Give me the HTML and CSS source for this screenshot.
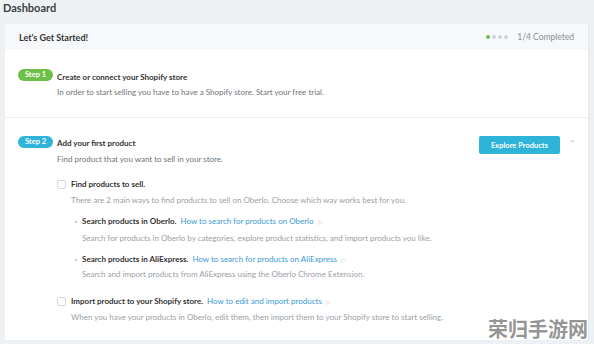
FILE: index.html
```html
<!DOCTYPE html>
<html lang="en">
<head>
    <meta charset="UTF-8">
    <title>Dashboard</title>
    <link rel="stylesheet" href="styles.css">
</head>
<body>
    <h1 class="page-title">Dashboard</h1>
    <div class="card">
        <div class="card-header">
            <h2>Let's Get Started!</h2>
            <div class="progress">
                <span class="dot done"></span><span class="dot"></span><span class="dot"></span><span class="dot"></span>
                <span class="progress-text">1/4 Completed</span>
            </div>
        </div>

        <div class="step step-one">
            <span class="pill green">Step 1</span>
            <div class="step-body">
                <div class="step-title">Create or connect your Shopify store</div>
                <p class="step-desc">In order to start selling you have to have a Shopify store. Start your free trial.</p>
            </div>
        </div>

        <div class="step step-two">
            <span class="pill blue">Step 2</span>
            <div class="step-body">
                <div class="step-title">Add your first product</div>
                <p class="step-desc">Find product that you want to sell in your store.</p>

                <div class="task">
                    <div class="task-head"><span class="check"></span><strong>Find products to sell.</strong></div>
                    <p class="task-desc">There are 2 main ways to find products to sell on Oberlo. Choose which way works best for you.</p>
                    <ul class="ways">
                        <li>
                            <div class="way-head"><strong>Search products in Oberlo.</strong> <a href="#">How to search for products on Oberlo</a> <span class="play">&#9655;</span></div>
                            <p class="way-desc">Search for products in Oberlo by categories, explore product statistics, and import products you like.</p>
                        </li>
                        <li>
                            <div class="way-head"><strong>Search products in AliExpress.</strong> <a href="#">How to search for products on AliExpress</a> <span class="play">&#9655;</span></div>
                            <p class="way-desc">Search and import products from AliExpress using the Oberlo Chrome Extension.</p>
                        </li>
                    </ul>
                </div>

                <div class="task task-import">
                    <div class="task-head"><span class="check"></span><strong>Import product to your Shopify store.</strong> <a href="#">How to edit and import products</a> <span class="play">&#9655;</span></div>
                    <p class="task-desc">When you have your products in Oberlo, edit them, then import them to your Shopify store to start selling.</p>
                </div>
            </div>
            <div class="step-actions">
                <button class="btn">Explore Products</button>
                <span class="chevron">&#8963;</span>
            </div>
        </div>
    </div>
    <div class="watermark">荣归手游网</div>
</body>
</html>
```

FILE: styles.css
```css
* {
    margin: 0;
    padding: 0;
    box-sizing: border-box;
}
body {
    background: #eef1f4;
    font-family: 'Lato', 'Liberation Sans', sans-serif;
    color: #333;
    overflow: hidden;
    height: 344px;
    position: relative;
}
.page-title {
    font-size: 11px;
    font-weight: 700;
    color: #3c3f44;
    padding: 1px 3px 0;
    height: 24px;
    line-height: 14px;
}
.card {
    margin: 0 5px;
    background: #fff;
    border-right: 1px solid #e4e8ee;
}
.card-header {
    display: flex;
    justify-content: space-between;
    align-items: center;
    height: 26px;
    padding: 0 14px;
    background: #f6f8fa;
}
.card-header h2 {
    font-size: 9px;
    font-weight: 700;
    color: #333;
}
.progress {
    display: flex;
    align-items: center;
    gap: 2px;
}
.dot {
    width: 4px;
    height: 4px;
    border-radius: 50%;
    background: #cdd1e2;
}
.dot.done {
    background: #6cc04a;
}
.progress-text {
    font-size: 8.5px;
    color: #8b9096;
    margin-left: 7px;
}
.step {
    display: flex;
    align-items: flex-start;
    padding: 19px 12px 0 13px;
    border-bottom: 1px solid #edf0f3;
}
.step-one {
    height: 68px;
}
.step-two {
    padding-top: 18px;
    height: 223px;
}
.pill {
    flex: none;
    width: 35px;
    height: 12px;
    border-radius: 6px;
    color: #fff;
    font-size: 7.5px;
    font-weight: 700;
    text-align: center;
    line-height: 12px;
    margin-right: 4px;
}
.pill.green {
    background: #6cc04a;
}
.pill.blue {
    background: #2eb3d9;
}
.step-body {
    flex: 1;
    padding-top: 1px;
}
.step-one .step-body {
    padding-top: 2px;
}
.step-title {
    font-size: 8px;
    font-weight: 700;
    line-height: 12px;
    color: #333;
}
.step-desc {
    font-size: 8px;
    color: #6f7479;
    line-height: 13px;
    margin-top: 3px;
}
.step-two .step-desc {
    margin-top: 4px;
}
.task {
    margin-top: 12px;
}
.task-import {
    margin-top: 14px;
}
.task-head, .way-head {
    display: flex;
    align-items: center;
    gap: 4px;
    font-size: 8px;
    line-height: 13px;
}
.task-head strong, .way-head strong {
    color: #333;
    font-weight: 700;
}
.check {
    width: 9px;
    height: 9px;
    border: 1px solid #d5d9de;
    border-radius: 2px;
    background: #fff;
    margin-right: 1px;
}
a {
    color: #3a9ad6;
    text-decoration: none;
}
.play {
    color: #c2c7cd;
    font-size: 6px;
}
.task-desc, .way-desc {
    font-size: 8px;
    color: #9aa0a6;
    line-height: 13px;
    margin-top: 3px;
    padding-left: 14px;
}
.ways {
    list-style: none;
    padding-left: 25px;
}
.ways li {
    position: relative;
    margin-top: 8px;
}
.ways li::before {
    content: "";
    position: absolute;
    left: -7px;
    top: 6px;
    width: 2px;
    height: 2px;
    border-radius: 50%;
    background: #b5bac0;
}
.ways li + li .way-desc {
    margin-top: 2px;
}
.way-desc {
    padding-left: 0;
    margin-top: 4px;
}
.step-actions {
    display: flex;
    align-items: flex-start;
    gap: 9px;
}
.btn {
    width: 81px;
    height: 18px;
    border: none;
    border-radius: 2px;
    background: #2eb3d9;
    color: #fff;
    font-family: inherit;
    font-size: 7.5px;
    font-weight: 700;
}
.chevron {
    color: #a8adb3;
    font-size: 8px;
    line-height: 14px;
}
.watermark {
    position: absolute;
    right: 6px;
    bottom: 1px;
    font-family: 'Noto Sans CJK SC', sans-serif;
    font-weight: 700;
    font-size: 20px;
    color: rgba(120, 120, 120, 0.8);
}
```
